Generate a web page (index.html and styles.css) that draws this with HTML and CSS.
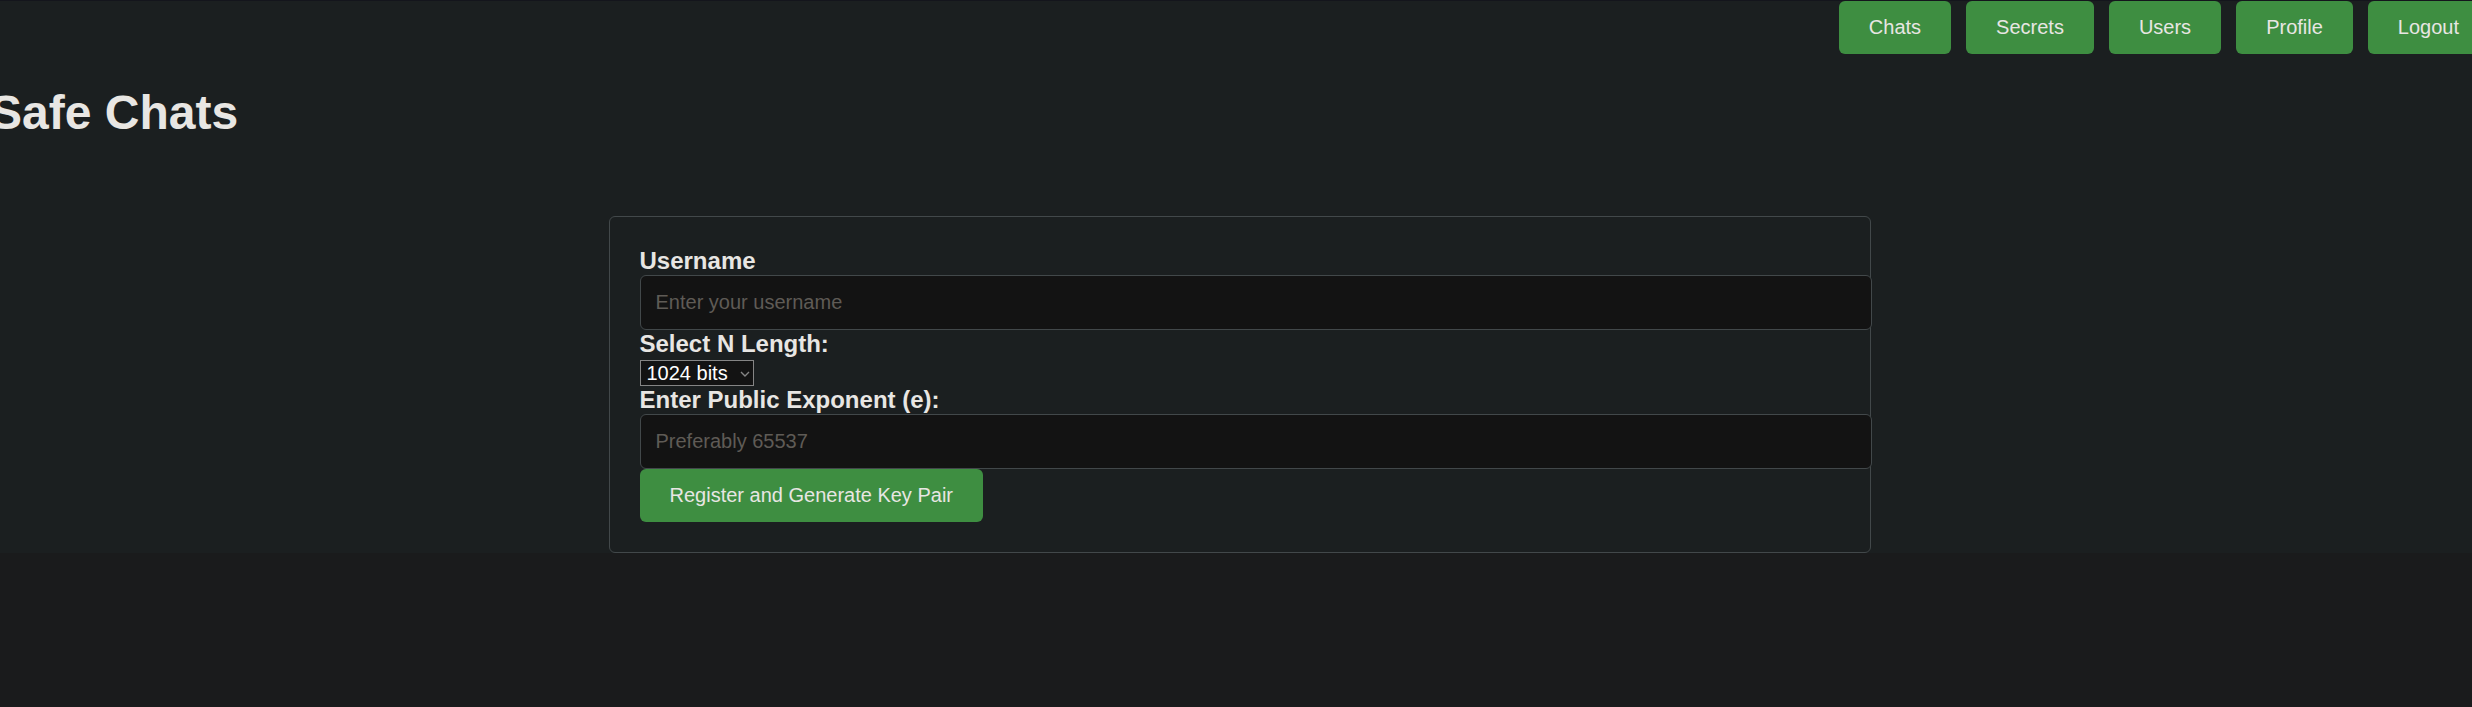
FILE: index.html
```html
<!DOCTYPE html>
<html lang="en">
<head>
<meta charset="utf-8">
<title>Safe Chats</title>
<link rel="stylesheet" href="styles.css">
</head>
<body>
<div class="app">
  <div class="page">
    <nav class="nav">
      <button class="btn" type="button">Chats</button>
      <button class="btn" type="button">Secrets</button>
      <button class="btn" type="button">Users</button>
      <button class="btn" type="button">Profile</button>
      <button class="btn" type="button">Logout</button>
    </nav>
    <h1 class="title">Safe Chats</h1>
    <form class="form">
      <label class="label" for="username">Username</label>
      <input class="input" id="username" type="text" placeholder="Enter your username">
      <label class="label" for="length">Select N Length:</label>
      <div class="select-wrap">
        <select class="select" id="length">
          <option>1024 bits</option>
          <option>2048 bits</option>
        </select>
        <svg class="arrow" viewBox="0 0 10 6" aria-hidden="true"><path d="M1 1l4 4 4-4" fill="none" stroke="#858585" stroke-width="1.4"/></svg>
      </div>
      <label class="label" for="exponent">Enter Public Exponent (e):</label>
      <input class="input" id="exponent" type="text" placeholder="Preferably 65537">
      <button class="btn" type="button">Register and Generate Key Pair</button>
    </form>
  </div>
</div>
</body>
</html>
```
FILE: styles.css
```css
body {
  margin: 0;
  background: #1a1b1c;
  color: #e8e6e3;
  font-family: "Liberation Sans", Arial, sans-serif;
  overflow-x: hidden;
}

.app {
  border-top: 1px solid #14151c;
  background: #1b1f20;
  overflow: hidden;
}

/* The page content bleeds past both window edges. */
.page {
  margin: 0 -17px 0 -10px;
}

.nav {
  display: flex;
  justify-content: flex-end;
  gap: 15px;
}

.btn {
  padding: 15px 30px;
  border: 0;
  border-radius: 6px;
  background: #3e8e41;
  color: #e8e6e3;
  font-family: inherit;
  font-size: 20px;
  line-height: 23px;
}

.title {
  margin: 31px 0 76px;
  font-size: 48px;
  line-height: 55px;
}

.form {
  display: flex;
  flex-direction: column;
  align-items: flex-start;
  max-width: 1200px;
  margin: 0 auto;
  padding: 30px;
  border: 1px solid #42484a;
  border-radius: 6px;
}

.label {
  font-size: 24px;
  font-weight: bold;
  line-height: 27px;
}

/* Padding and border extend past the form's content box. */
.input {
  box-sizing: content-box;
  width: 100%;
  height: 23px;
  margin-top: 1px;
  padding: 15px;
  border: 1px solid #42484a;
  border-radius: 6px;
  background: #131313;
  color: #e8e6e3;
  font-family: inherit;
  font-size: 20px;
}

.input::placeholder {
  color: #5f5b56;
}

.select-wrap {
  position: relative;
  margin-top: 3px;
}

.select {
  display: block;
  appearance: none;
  height: 26px;
  padding: 0 24px 0 6px;
  border: 1px solid #858585;
  border-radius: 0;
  background: #131313;
  color: #fff;
  font-family: inherit;
  font-size: 20px;
}

.arrow {
  position: absolute;
  top: 11px;
  right: 4px;
  width: 10px;
  height: 6px;
  pointer-events: none;
}
```
